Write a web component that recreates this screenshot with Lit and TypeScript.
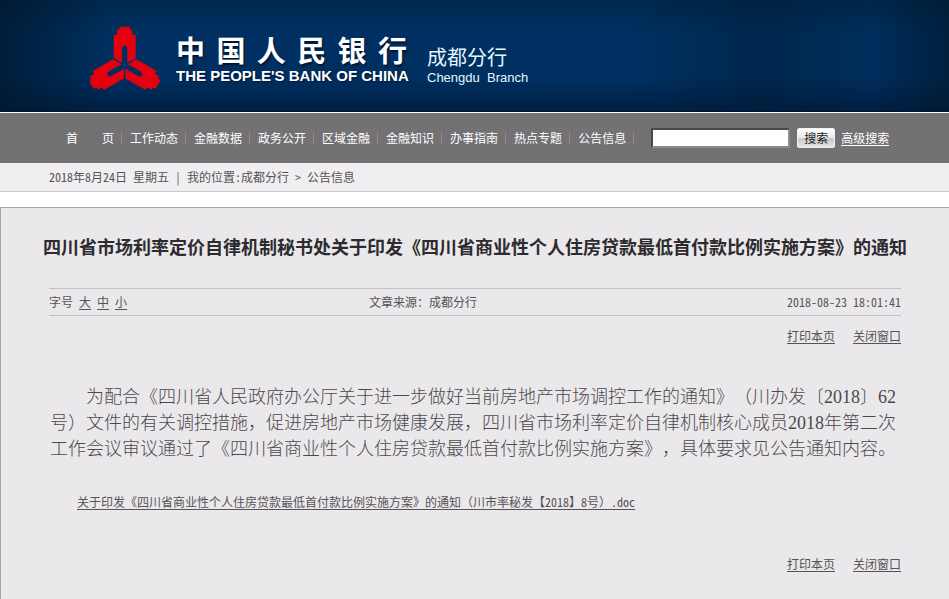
import { LitElement, html, svg, css } from "lit";
import { customElement } from "lit/decorators.js";

const NAV = ["首　　页", "工作动态", "金融数据", "政务公开", "区域金融", "金融知识", "办事指南", "热点专题", "公告信息"];
const ARM = "M-11-7.200V-30.500H-7.600V-35.500H-5.200V-38.600H5.200V-35.500H7.600V-30.500H11V-7.200L2.600-2.200V-17Q2.400-19.500 0-20Q-2.400-19.500-2.600-17V-2.200Z";

@customElement("bank-header")
class BankHeader extends LitElement {
  static styles = css`
    :host { display: block; }
    .banner {
      display: flex;
      height: 112px;
      box-sizing: border-box;
      padding-left: 90px;
      background:
        linear-gradient(90deg, rgba(0, 22, 40, .7), rgba(0, 22, 40, 0) 12%, rgba(0, 22, 40, 0) 66%, rgba(0, 26, 46, .4) 80%, rgba(0, 22, 40, .1) 92%, rgba(0, 22, 40, .6)),
        linear-gradient(#00284d, #003062 30%, #003062 70%, #001f44);
      border-bottom: 1px solid #001530;
      color: #fff;
    }
    .emblem { width: 70px; height: 66px; margin-top: 26px; }
    .name { margin: 32px 0 0 16px; width: 231px; }
    .cn {
      display: flex;
      justify-content: space-between;
      font: 700 29px/34px "Noto Sans CJK SC", sans-serif;
      text-shadow: 1px 2px 2px #001430;
    }
    .en {
      font: 700 15px/20px "Liberation Sans", sans-serif;
      white-space: nowrap;
      text-shadow: 1px 1px 2px #001430;
    }
    .branch { margin: 44px 0 0 20px; color: #e4f8ff; }
    .branch-cn { font: 20px/26px "Noto Sans CJK SC", sans-serif; }
    .branch-en { font: 13px/15px "Liberation Sans", sans-serif; white-space: pre; }
  `;
  render() {
    return html`<header class="banner">
      <svg class="emblem" viewBox="0 0 70 66" aria-hidden="true">
        <g fill="#e3000f">
          ${[0, 120, 240].map((a) => svg`<path d=${ARM} transform="translate(34.700 39.300) rotate(${a})" />`)}
        </g>
      </svg>
      <div class="name">
        <div class="cn">${[..."中国人民银行"].map((c) => html`<span>${c}</span>`)}</div>
        <div class="en">THE PEOPLE'S BANK OF CHINA</div>
      </div>
      <div class="branch">
        <div class="branch-cn">成都分行</div>
        <div class="branch-en">Chengdu  Branch</div>
      </div>
    </header>`;
  }
}

@customElement("bank-nav")
class BankNav extends LitElement {
  static styles = css`
    :host { display: block; }
    .bar {
      display: flex;
      align-items: center;
      height: 51px;
      box-sizing: border-box;
      padding-left: 58px;
      border-top: 1px solid #fff;
      background: #737174;
      font: 12px/16px "Noto Sans CJK SC", sans-serif;
    }
    nav { display: flex; }
    a { color: #fff; text-decoration: none; white-space: nowrap; }
    .item { padding: 0 8px; }
    .cell { display: flex; align-items: center; }
    .cell::after { content: ""; width: 1px; height: 12px; margin-left: -1px; background: #8f8d90; }
    form { display: flex; align-items: center; margin: 0 0 0 17px; }
    input {
      width: 139px;
      height: 20px;
      box-sizing: border-box;
      border: 2px solid;
      border-color: #4a484b #8d8b8e #8d8b8e #4a484b;
      background: #fff;
      padding: 0 2px;
      font: inherit;
    }
    button {
      width: 38px;
      height: 20px;
      margin: 0 6px 0 7px;
      padding: 0;
      border: 1px solid #f0eff1;
      border-radius: 2px;
      background: linear-gradient(#fff, #ececee 45%, #c9c7ca 55%, #e6e5e7);
      color: #222;
      font: inherit;
    }
    .more { text-decoration: underline; text-underline-offset: 2px; }
  `;
  render() {
    return html`<div class="bar">
      <nav>${NAV.map((n) => html`<span class="cell"><a class="item" href="#">${n}</a></span>`)}</nav>
      <form>
        <input type="text" aria-label="搜索" />
        <button type="button">搜索</button>
        <a class="more" href="#">高级搜索</a>
      </form>
    </div>`;
  }
}

@customElement("app-root")
class AppRoot extends LitElement {
  static styles = css`
    :host {
      display: flex;
      flex-direction: column;
      min-height: 100vh;
      background: #fff;
      color: #555356;
      font: 12px/16px "Noto Sans CJK SC", sans-serif;
      text-spacing-trim: space-all;
    }
    a { color: inherit; text-underline-offset: 2px; }
    .half { font-feature-settings: "hwid"; }
    .crumbs {
      height: 28px;
      line-height: 28px;
      padding-left: 49px;
      background: #f0eef1;
      border-bottom: 1px solid #cbc9cc;
      white-space: pre;
    }
    .article {
      flex: 1;
      margin-top: 15px;
      padding: 0 48px;
      border-top: 1px solid #a9a7aa;
      border-left: 1px solid #a9a7aa;
      background: #eae8eb;
    }
    h1 {
      margin: 23px -48px 0;
      color: #2d2b2e;
      font-size: 18px;
      line-height: 30px;
      text-align: center;
    }
    .meta {
      display: grid;
      grid-template-columns: 320px 1fr auto;
      margin-top: 27px;
      line-height: 26px;
      border-top: 1px solid #c2c0c3;
      border-bottom: 1px solid #c2c0c3;
    }
    .sizes { display: flex; gap: 6px; }
    .actions { display: flex; justify-content: flex-end; gap: 18px; margin-top: 12px; }
    .text {
      margin: 40px 0 0 1px;
      color: #4a484b;
      font: 300 18px/26px "Liberation Serif", "Noto Sans CJK SC", serif;
      text-indent: 36px;
    }
    .file { margin: 32px 0 46px 28px; }
  `;
  actions() {
    return html`<div class="actions"><a href="#">打印本页</a><a href="#">关闭窗口</a></div>`;
  }
  render() {
    return html`
      <bank-header></bank-header>
      <bank-nav></bank-nav>
      <div class="crumbs half">2018年8月24日 星期五 | 我的位置:成都分行 > 公告信息</div>
      <main class="article">
        <h1>四川省市场利率定价自律机制秘书处关于印发《四川省商业性个人住房贷款最低首付款比例实施方案》的通知</h1>
        <div class="meta">
          <span class="sizes">字号 <a href="#">大</a><a href="#">中</a><a href="#">小</a></span>
          <span>文章来源：成都分行</span>
          <time class="half">2018-08-23 18:01:41</time>
        </div>
        ${this.actions()}
        <p class="text">为配合《四川省人民政府办公厅关于进一步做好当前房地产市场调控工作的通知》（川办发〔2018〕62号）文件的有关调控措施，促进房地产市场健康发展，四川省市场利率定价自律机制核心成员2018年第二次工作会议审议通过了《四川省商业性个人住房贷款最低首付款比例实施方案》，具体要求见公告通知内容。</p>
        <p class="file"><a href="#">关于印发《四川省商业性个人住房贷款最低首付款比例实施方案》的通知（川市率秘发【<span class="half">2018</span>】<span class="half">8</span>号）<span class="half">.doc</span></a></p>
        ${this.actions()}
      </main>`;
  }
}
